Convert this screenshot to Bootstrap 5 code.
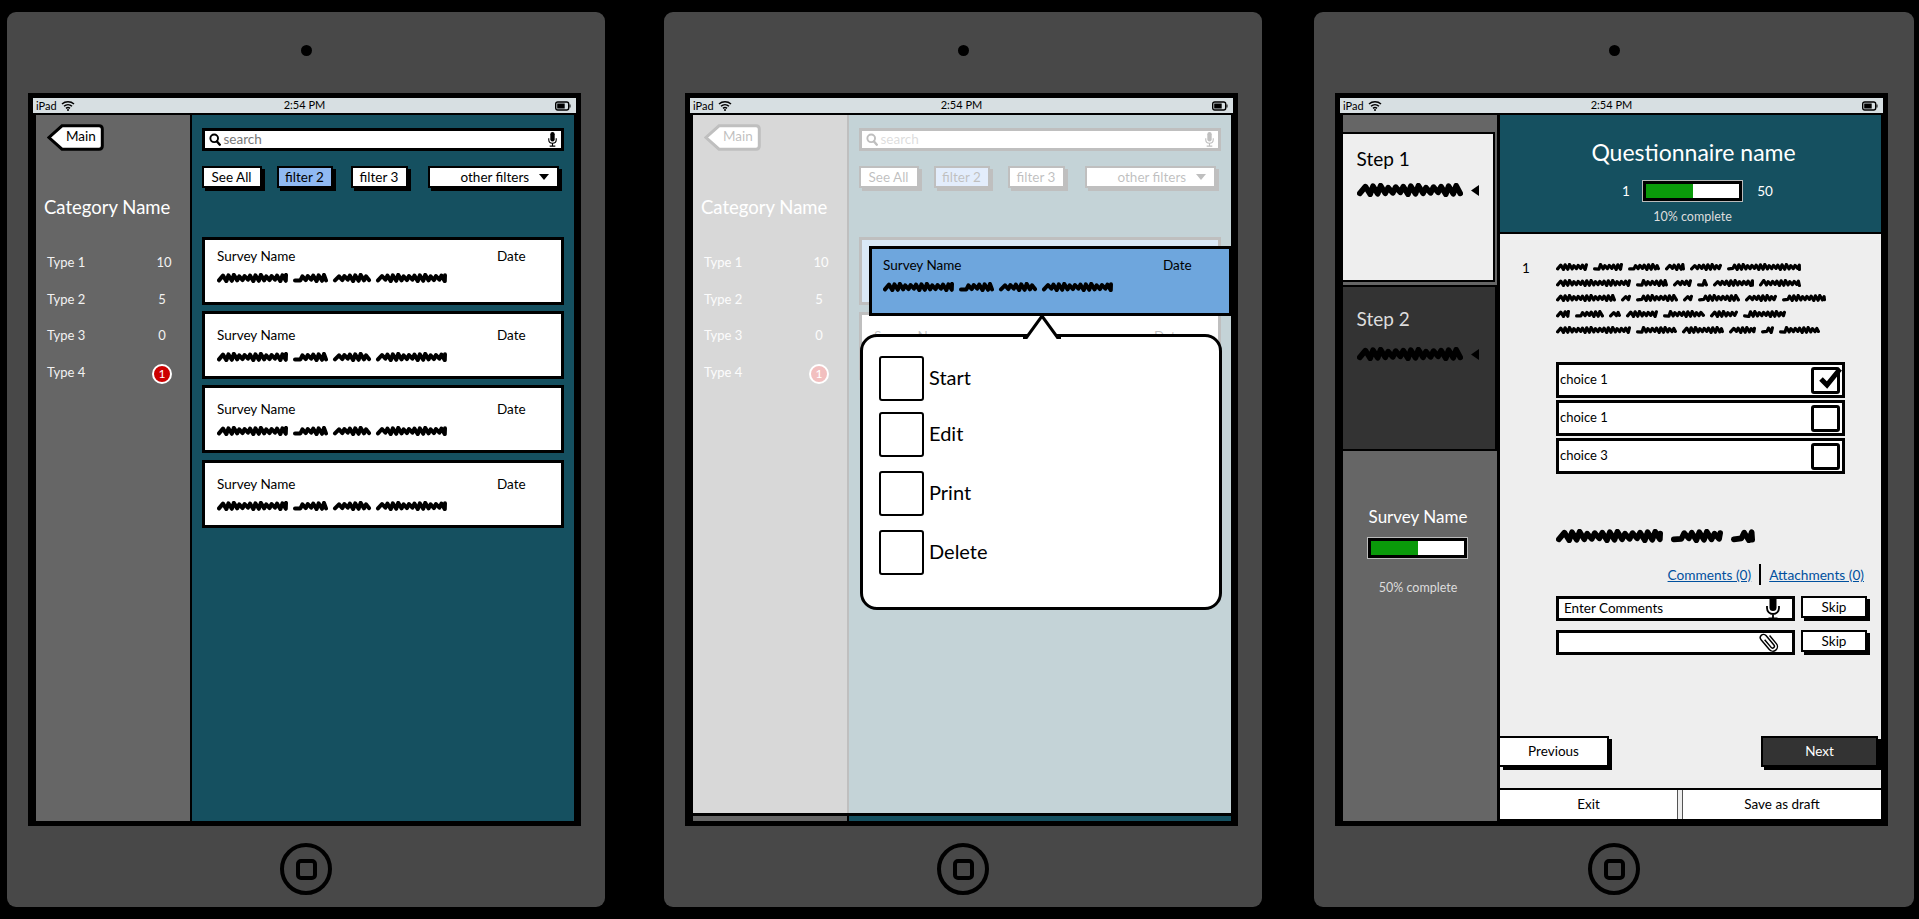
<!DOCTYPE html>
<html lang="en">
<head>
<meta charset="utf-8">
<title>Survey wireframes</title>
<link href="https://cdn.jsdelivr.net/npm/bootstrap@5.3.0/dist/css/bootstrap.min.css" rel="stylesheet">
<style>
html,body{height:100%;background:#000;overflow:hidden}
body{font-family:"Lato","Liberation Sans",sans-serif;font-size:13.5px;line-height:16px;color:#000}
.stage{padding-top:12px}
.tablet{width:598px;height:895px;background:#484848;border-radius:9px;flex:none}
.t1{margin-left:7px}.t2{margin-left:59px}.t3{margin-left:52px;width:600px}
.cam{width:11px;height:11px;border-radius:50%;background:#000;margin-top:33px}
.screen{width:553px;height:733px;margin-top:37px;margin-left:21px;align-self:flex-start;border:5px solid #000;background:#000;flex:none}
.statusbar{height:15px;background:#d7dfe2;font-size:11px;line-height:14px;padding:0 5px 0 3px;position:relative}
.statusbar .clock{position:absolute;left:0;right:0;top:0;text-align:center}
.sbody{height:708px;padding:2px 2px 0 3px;position:relative}
.sidepane{width:154px;background:#666;color:#f2f2f2;flex:none}
.pane{width:382px;margin-left:2px;background:#155060;flex:none}
.homebtn{width:52px;height:52px;border:4px solid #000;border-radius:50%;margin-top:17px}
.homebtn i{display:block;width:21px;height:21px;border:4px solid #000;border-radius:5px}
.backbtn{position:relative;width:57px;height:27px;margin:9px 0 0 11px;color:#000}
.backbtn svg{position:absolute;left:0;top:0}
.backbtn span{position:absolute;left:19px;top:4px}
.catname{font-size:18.5px;line-height:22px;margin:45px 0 0 8px;color:#fff;white-space:nowrap}
.typelist{margin-top:36px;padding:0 14px 0 11px}
.typerow{height:36.7px;font-size:13px}
.cnt{width:24px;text-align:center}
.cntn{padding-right:4px}
.alertdot{width:20px;height:20px;border-radius:50%;background:#c00;border:2px solid #fff;color:#fff;font-size:12px;line-height:16px;text-align:center;margin-right:4px}
.panein{padding:13px 10px 0 9.5px}
.searchbox{height:23px;background:#fff;border:3px solid #000;padding:0 4px 0 4px;color:#777;font-size:13.5px}
.searchbox span{margin-left:3px;margin-top:-2px}
.filters{margin-top:15px;height:25px}
.fbtn{height:22px;border:2px solid #000;box-shadow:3px 3px 0 #000;background:#fff;font-size:13.5px;line-height:18px;text-align:center}
.f1{width:60px}.f2{width:56px;margin-left:15px;background:#90b9f2}.f3{width:57px;margin-left:18px}.f4{width:131px;margin-left:20px;padding-left:31px;padding-right:8px}
.surveys{margin-top:46px}
.surv{height:67.5px;margin-top:6.5px;background:#fff;border:3px solid #000;padding:12.5px 12px 0 12.5px}
.surv:first-child{margin-top:0;padding-top:7.5px}
.surv:last-child{margin-top:7.5px}
.surv.chosen{background:#6ea6dd;margin-top:0}
.survname{width:280px}
.scrib{display:block;margin-top:9px}
.wash{position:absolute;left:3px;right:2px;top:2px;height:701px;background:rgba(255,255,255,.75);border-bottom:3px solid #000}
.pick{background:#6ea6dd;border:3px solid #000;position:absolute;left:179px;top:133px;width:363px;height:70px;padding:8px 12px 0 11px}
.popmenu{position:absolute;left:170px;top:221px;width:362px;height:276px;background:#fff;border:3px solid #000;border-radius:17px;padding:19px 16px}
.popmenu svg{position:absolute;left:160px;top:-23px}
.popitem{font-size:20px;gap:5px;margin-bottom:11px}
.popitem i{display:block;width:45px;height:45px;border:2.5px solid #000;border-radius:3px}
.popitem span{margin-top:-3px}
.popitem:nth-child(n+3){margin-bottom:14px}
.stepa{height:150px;margin-top:17px;margin-right:2px;background:#eee;border:2px solid #000;border-left:0;padding:13px 0 0 13.5px;font-size:19px;line-height:24px;color:#000}
.stepb{height:166px;margin-top:3px;background:#333;border:2px solid #000;border-left:0;padding:20px 0 0 13.5px;font-size:19px;line-height:24px;color:#ddd}
.stepscr{margin-top:12px;gap:8px}
.stepb .stepscr{margin-top:16px}
.stepscr .scrib{margin:0}
.sumname{font-size:17px;line-height:20px;margin-top:56px;margin-right:4px;color:#fff}
.pbar{width:99px;height:20px;border:3px solid #000;background:#fff;box-shadow:0 0 0 1px #bbb;flex:none}
.pbar b{display:block;height:100%;background:#0a9a0a}
.sumbar{margin:11px 0 0 25px}
.bar60 b{width:47px}
.sumtext{margin-top:22px;margin-right:4px;font-size:12.5px;color:#ddd}
.panethree{margin-left:3px;width:381px}
.qhead{height:119px;border-bottom:2px solid #000;color:#fff;flex:none}
.qtitle{font-size:23px;line-height:30px;padding-top:22px;margin-left:6px}
.qprog{margin:14px 0 0 16px}
.qprog span:first-child{width:34px;text-align:center}
.qprog span:last-child{width:46px;text-align:center}
.qpct{margin:8px 0 0 4px;font-size:12.5px;color:#ddd}
.qbody{background:#eee;flex:1 1 auto;min-height:0}
.qtop{padding:29px 0 0 22px}
.qnum{width:34px;line-height:10px}
.para .scrib{margin:0 0 7.65px}
.choice{width:288.5px;height:36px;margin:0 0 2px 56px;background:#fff;border:3px solid #000;padding:0 2px 2px 1px;font-size:13px}
.chooselist{margin-top:21px}
.tick{width:29px;height:27px;margin-bottom:-2px;border:3px solid #000;border-radius:3px;position:relative}
.tick svg{position:absolute;left:1px;top:-5px}
.bigscr{margin:53px 0 0 56px}
.links{margin:21px 17px 0 0;font-size:13.7px;line-height:20px}
.links a{color:#00509e}
.links i{display:block;width:2px;height:21px;background:#000;margin:0 8px}
.inrow{margin:10.5px 0 0 56px}
.inrow+.inrow{margin-top:9px}
.inbox{width:238.5px;height:25px;background:#fff;border:3px solid #000;padding:0 12px 0 5px;font-size:13.5px}
.skip{width:66px;margin-left:6.5px}
.footnav{margin-top:auto;height:34px}
.navbtn{border:2px solid #000;box-shadow:3px 3px 0 #000;background:#fff;height:31px;line-height:27px;text-align:center;font-size:13.5px}
.prev{width:109px;border-left:0}
.next{width:117px;margin-right:3px;background:#333;color:#fff}
.footbar{margin-top:18px;height:33px;border-top:2px solid #000;border-bottom:2px solid #000;font-size:13.5px;line-height:29px;text-align:center;flex:none;background:#eee}
.exit{width:178px;background:#fff;border-right:1px solid #555}
.save{margin-left:4px;flex:1 1 auto;background:#fff;border-left:1px solid #555}
</style>
</head>
<body>
<svg width="0" height="0" class="position-absolute">
<symbol id="wifi" viewBox="0 0 14 11"><g fill="none" stroke="#000" stroke-width="1.5"><path d="M1 4c3.400-3 8.600-3 12 0"/><path d="M3 6.300c2.300-2 5.700-2 8 0"/><path d="M5 8.400c1.200-1 2.800-1 4 0"/></g><circle cx="7" cy="10" r="1"/></symbol>
<symbol id="batt" viewBox="0 0 16 10"><rect x=".7" y="1" width="13" height="8" rx="2" fill="none" stroke="#000" stroke-width="1.400"/><rect x="2.200" y="2.500" width="7.500" height="5"/><path d="M14.500 3.500h1v3h-1z"/></symbol>
<symbol id="loupe" viewBox="0 0 15 16"><circle cx="6.500" cy="6.500" r="4.800" fill="none" stroke="#000" stroke-width="2.400"/><path d="M10 10.500l3.500 4" stroke="#000" stroke-width="3" stroke-linecap="round"/></symbol>
<symbol id="mic" viewBox="0 0 14 24"><rect x="3.500" y="0" width="7" height="15" rx="3.500"/><path d="M1 10v2c0 3.500 2.700 6 6 6s6-2.500 6-6v-2M7 18v4M2.500 22.500h9" fill="none" stroke="#000" stroke-width="1.800"/></symbol>
<symbol id="clip" viewBox="0 0 24 24"><path transform="rotate(-40 12 12)" d="M10 7V18a2 2 0 0 0 4 0V4.500a3.500 3.500 0 0 0-7 0V18.500a5 5 0 0 0 10 0V7" fill="none" stroke="#000" stroke-width="1.600"/></symbol>
</svg>

<main class="stage d-flex">

<section class="tablet t1 d-flex flex-column align-items-center">
  <div class="cam"></div>
  <div class="screen">
    <div class="statusbar d-flex align-items-center"><span>iPad</span><svg width="14" height="11" class="ms-1"><use href="#wifi"/></svg><span class="clock">2:54 PM</span><svg width="16" height="10" class="ms-auto"><use href="#batt"/></svg></div>
    <div class="sbody d-flex">
      <aside class="sidepane">
        <div class="backbtn"><svg width="57" height="27"><path d="M15 1.800H52q3.300 0 3.300 3.300V22q0 3.200-3.300 3.200H15L2 13.500Z" fill="#fff" stroke="#000" stroke-width="3"/></svg><span>Main</span></div>
        <div class="catname">Category Name</div>
        <div class="typelist">
          <div class="typerow d-flex justify-content-between"><span>Type 1</span><span class="cnt">10</span></div>
          <div class="typerow d-flex justify-content-between"><span>Type 2</span><span class="cnt cntn">5</span></div>
          <div class="typerow d-flex justify-content-between"><span>Type 3</span><span class="cnt cntn">0</span></div>
          <div class="typerow d-flex justify-content-between"><span>Type 4</span><span class="alertdot">1</span></div>
        </div>
      </aside>
      <div class="pane panein">
        <div class="searchbox d-flex align-items-center"><svg width="12" height="13"><use href="#loupe"/></svg><span>search</span><svg width="9" height="15" class="ms-auto"><use href="#mic"/></svg></div>
        <div class="filters d-flex"><div class="fbtn f1">See All</div><div class="fbtn f2">filter 2</div><div class="fbtn f3">filter 3</div><div class="fbtn f4 d-flex justify-content-between align-items-center"><span>other filters</span><svg width="10" height="6"><path d="M0 0h10L5 6z"/></svg></div></div>
        <div class="surveys">
          <div class="surv"><div class="d-flex"><span class="survname">Survey Name</span><span>Date</span></div><span class="scrib" data-words="71 35 38 71" data-h="10"></span></div>
          <div class="surv"><div class="d-flex"><span class="survname">Survey Name</span><span>Date</span></div><span class="scrib" data-words="71 35 38 71" data-h="10"></span></div>
          <div class="surv"><div class="d-flex"><span class="survname">Survey Name</span><span>Date</span></div><span class="scrib" data-words="71 35 38 71" data-h="10"></span></div>
          <div class="surv"><div class="d-flex"><span class="survname">Survey Name</span><span>Date</span></div><span class="scrib" data-words="71 35 38 71" data-h="10"></span></div>
        </div>
      </div>
    </div>
  </div>
  <div class="homebtn d-flex align-items-center justify-content-center"><i></i></div>
</section>

<section class="tablet t2 d-flex flex-column align-items-center">
  <div class="cam"></div>
  <div class="screen">
    <div class="statusbar d-flex align-items-center"><span>iPad</span><svg width="14" height="11" class="ms-1"><use href="#wifi"/></svg><span class="clock">2:54 PM</span><svg width="16" height="10" class="ms-auto"><use href="#batt"/></svg></div>
    <div class="sbody d-flex">
      <aside class="sidepane">
        <div class="backbtn"><svg width="57" height="27"><path d="M15 1.800H52q3.300 0 3.300 3.300V22q0 3.200-3.300 3.200H15L2 13.500Z" fill="#fff" stroke="#000" stroke-width="3"/></svg><span>Main</span></div>
        <div class="catname">Category Name</div>
        <div class="typelist">
          <div class="typerow d-flex justify-content-between"><span>Type 1</span><span class="cnt">10</span></div>
          <div class="typerow d-flex justify-content-between"><span>Type 2</span><span class="cnt cntn">5</span></div>
          <div class="typerow d-flex justify-content-between"><span>Type 3</span><span class="cnt cntn">0</span></div>
          <div class="typerow d-flex justify-content-between"><span>Type 4</span><span class="alertdot">1</span></div>
        </div>
      </aside>
      <div class="pane panein">
        <div class="searchbox d-flex align-items-center"><svg width="12" height="13"><use href="#loupe"/></svg><span>search</span><svg width="9" height="15" class="ms-auto"><use href="#mic"/></svg></div>
        <div class="filters d-flex"><div class="fbtn f1">See All</div><div class="fbtn f2">filter 2</div><div class="fbtn f3">filter 3</div><div class="fbtn f4 d-flex justify-content-between align-items-center"><span>other filters</span><svg width="10" height="6"><path d="M0 0h10L5 6z"/></svg></div></div>
        <div class="surveys">
          <div class="surv chosen"></div>
          <div class="surv"><div class="d-flex"><span class="survname">Survey Name</span><span>Date</span></div></div>
        </div>
      </div>
      <div class="wash"></div>
      <div class="pick"><div class="d-flex"><span class="survname">Survey Name</span><span>Date</span></div><span class="scrib" data-words="71 35 38 71" data-h="10"></span></div>
      <div class="popmenu">
        <svg width="38" height="26"><path d="M0 22.500H3L19 2l16 20.500H38V26H0Z" fill="#fff"/><path d="M0 23.500H3.500L19 2l15.500 21.500H38" fill="none" stroke="#000" stroke-width="3"/></svg>
        <div class="popitem d-flex align-items-center"><i></i><span>Start</span></div>
        <div class="popitem d-flex align-items-center"><i></i><span>Edit</span></div>
        <div class="popitem d-flex align-items-center"><i></i><span>Print</span></div>
        <div class="popitem d-flex align-items-center"><i></i><span>Delete</span></div>
      </div>
    </div>
  </div>
  <div class="homebtn d-flex align-items-center justify-content-center"><i></i></div>
</section>

<section class="tablet t3 d-flex flex-column align-items-center">
  <div class="cam"></div>
  <div class="screen">
    <div class="statusbar d-flex align-items-center"><span>iPad</span><svg width="14" height="11" class="ms-1"><use href="#wifi"/></svg><span class="clock">2:54 PM</span><svg width="16" height="10" class="ms-auto"><use href="#batt"/></svg></div>
    <div class="sbody d-flex">
      <aside class="sidepane">
        <div class="stepa">Step 1<div class="stepscr d-flex align-items-center"><span class="scrib" data-words="106" data-h="14"></span><svg width="8" height="11"><path d="M8 0v11L0 5.500z"/></svg></div></div>
        <div class="stepb">Step 2<div class="stepscr d-flex align-items-center"><span class="scrib" data-words="106" data-h="14"></span><svg width="8" height="11"><path d="M8 0v11L0 5.500z"/></svg></div></div>
        <div class="sumname text-center">Survey Name</div>
        <div class="pbar sumbar bar60"><b></b></div>
        <div class="sumtext text-center">50% complete</div>
      </aside>
      <div class="pane panethree d-flex flex-column">
        <header class="qhead text-center">
          <div class="qtitle">Questionnaire name</div>
          <div class="qprog d-flex justify-content-center align-items-center"><span>1</span><div class="pbar bar60"><b></b></div><span>50</span></div>
          <div class="qpct">10% complete</div>
        </header>
        <div class="qbody d-flex flex-column">
          <div class="qtop d-flex">
            <div class="qnum">1</div>
            <div class="para">
              <span class="scrib" data-words="32 30 32 20 32 74" data-h="8"></span>
              <span class="scrib" data-words="75 32 19 11 41 42" data-h="8"></span>
              <span class="scrib" data-words="60 10 42 10 42 32 44" data-h="8"></span>
              <span class="scrib" data-words="14 29 12 32 42 28 43" data-h="8"></span>
              <span class="scrib" data-words="75 41 42 27 13 41" data-h="8"></span>
            </div>
          </div>
          <div class="chooselist">
            <div class="choice d-flex align-items-center justify-content-between"><span>choice 1</span><div class="tick"><svg width="30" height="26" viewBox="0 0 30 26"><path d="M6 14l6 6L25 4" fill="none" stroke="#000" stroke-width="5"/></svg></div></div>
            <div class="choice d-flex align-items-center justify-content-between"><span>choice 1</span><div class="tick"></div></div>
            <div class="choice d-flex align-items-center justify-content-between"><span>choice 3</span><div class="tick"></div></div>
          </div>
          <span class="scrib bigscr" data-words="107 52 24" data-h="14" data-gap="8"></span>
          <div class="links d-flex justify-content-end align-items-center"><a href="#">Comments (0)</a><i></i><a href="#">Attachments (0)</a></div>
          <div class="inrow d-flex"><div class="inbox d-flex align-items-center justify-content-between"><span>Enter Comments</span><svg width="14" height="24"><use href="#mic"/></svg></div><div class="fbtn skip">Skip</div></div>
          <div class="inrow d-flex"><div class="inbox d-flex align-items-center justify-content-end"><svg width="22" height="22"><use href="#clip"/></svg></div><div class="fbtn skip">Skip</div></div>
          <div class="footnav d-flex justify-content-between"><div class="navbtn prev">Previous</div><div class="navbtn next">Next</div></div>
          <div class="footbar d-flex"><div class="exit">Exit</div><div class="save">Save as draft</div></div>
        </div>
      </div>
    </div>
  </div>
  <div class="homebtn d-flex align-items-center justify-content-center"><i></i></div>
</section>

</main>
<script src="https://cdn.jsdelivr.net/npm/bootstrap@5.3.0/dist/js/bootstrap.bundle.min.js"></script>
<script>
/* Hand-drawn "greeked text" squiggles: one jagged stroke per word, widths come from data-words. */
document.querySelectorAll('.scrib[data-words]').forEach(function (el) {
  var h = +el.dataset.h, gap = +(el.dataset.gap || 5), words = el.dataset.words.split(' ').map(Number);
  var total = words.reduce(function (a, b) { return a + b + gap; }, -gap);
  var sw = h * .4, a = h * .24, step = Math.max(1.9, h * .27), mid = h / 2, x = 0, d = '', k = 0;
  words.forEach(function (w) {
    var p = x + sw, end = x + w - sw / 2;
    d += 'M' + (x + sw / 2).toFixed(1) + ' ' + (mid + a).toFixed(1);
    while (p < end) {
      p = Math.min(p + step * (k % 2 ? 1.25 : .75), end); k++;
      var j = (k * 7 % 5 - 2) * h * .035;
      d += 'L' + p.toFixed(1) + ' ' + (mid + (k % 2 ? -a : a) + j).toFixed(1);
    }
    x += w + gap;
  });
  el.innerHTML = '<svg width="' + total + '" height="' + h + '" class="d-block"><path d="' + d + '" fill="none" stroke="#000" stroke-width="' + sw + '" stroke-linecap="round" stroke-linejoin="round"/></svg>';
});
</script>
</body>
</html>
